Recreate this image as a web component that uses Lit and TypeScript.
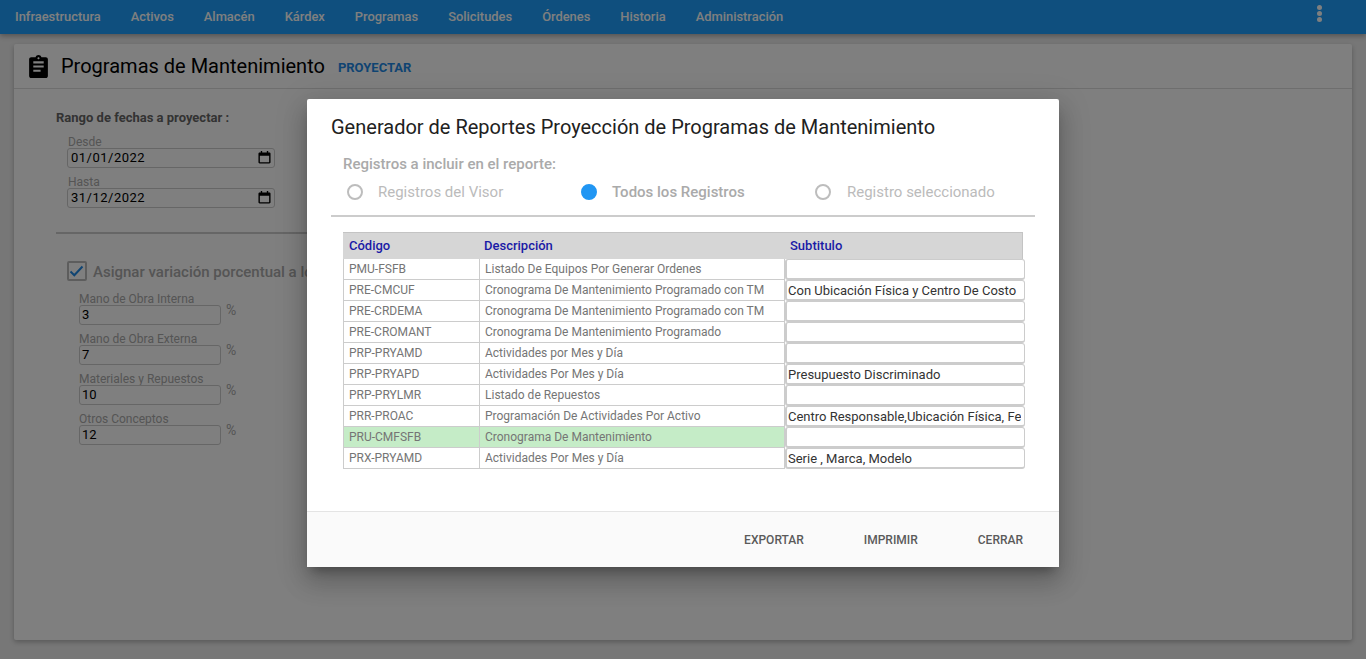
import type { TemplateResult } from 'lit';
import { css, html, LitElement } from 'lit';
import { customElement } from 'lit/decorators.js';

const MENU = ['Infraestructura', 'Activos', 'Almacén', 'Kárdex', 'Programas', 'Solicitudes', 'Órdenes', 'Historia', 'Administración'];

const PERCENTS = [
  { label: 'Mano de Obra Interna', value: '3' },
  { label: 'Mano de Obra Externa', value: '7' },
  { label: 'Materiales y Repuestos', value: '10' },
  { label: 'Otros Conceptos', value: '12' },
];

const REPORTS = [
  { code: 'PMU-FSFB', desc: 'Listado De Equipos Por Generar Ordenes', sub: '' },
  { code: 'PRE-CMCUF', desc: 'Cronograma De Mantenimiento Programado con TM', sub: 'Con Ubicación Física y Centro De Costo' },
  { code: 'PRE-CRDEMA', desc: 'Cronograma De Mantenimiento Programado con TM', sub: '' },
  { code: 'PRE-CROMANT', desc: 'Cronograma De Mantenimiento Programado', sub: '' },
  { code: 'PRP-PRYAMD', desc: 'Actividades por Mes y Día', sub: '' },
  { code: 'PRP-PRYAPD', desc: 'Actividades Por Mes y Día', sub: 'Presupuesto Discriminado' },
  { code: 'PRP-PRYLMR', desc: 'Listado de Repuestos', sub: '' },
  { code: 'PRR-PROAC', desc: 'Programación De Actividades Por Activo', sub: 'Centro Responsable,Ubicación Física, Fecha' },
  { code: 'PRU-CMFSFB', desc: 'Cronograma De Mantenimiento', sub: '', selected: true },
  { code: 'PRX-PRYAMD', desc: 'Actividades Por Mes y Día', sub: 'Serie , Marca, Modelo' },
];

@customElement('app-root')
export class AppRoot extends LitElement {
  public static styles = css`
    :host {
      position: relative;
      display: block;
      height: 659px;
      overflow: hidden;
      font-family: Roboto, 'Liberation Sans', sans-serif;
      background: #eeeeee;
    }

    .nav {
      display: flex;
      align-items: center;
      gap: 30px;
      box-sizing: border-box;
      height: 34px;
      padding: 0 15px 2px;
      background: #1e9ffd;
      box-shadow: 0 2px 5px rgba(0, 0, 0, 0.3);
      font-size: 12.9px;
      font-weight: 500;
      color: #fff;
    }

    .dots {
      display: flex;
      flex-direction: column;
      gap: 1px;
      margin-left: auto;
      margin-right: 29px;
      margin-top: -6px;
    }

    .dots i {
      width: 5px;
      height: 5px;
      background: #fff;
      border-radius: 50%;
    }

    .card {
      height: 596px;
      margin: 10px 14px 0;
      background: #fff;
      border-radius: 2px;
      box-shadow: 0 2px 5px rgba(0, 0, 0, 0.26);
    }

    .card-head {
      display: flex;
      align-items: center;
      height: 44px;
      padding-left: 12px;
      border-bottom: 1px solid #ddd;
    }

    .card-head svg {
      width: 25px;
      height: 25px;
      margin-right: 10px;
    }

    .card-head h1 {
      margin: 0;
      font-size: 20px;
      font-weight: 400;
      color: #000;
    }

    .card-head a {
      margin: 2px 0 0 13px;
      font-size: 13px;
      font-weight: 700;
      color: #1e88e5;
    }

    .card-body {
      width: 640px;
      padding: 21px 0 0 42px;
    }

    .range-title {
      font-size: 13px;
      font-weight: 700;
      line-height: 16px;
      color: #666;
    }

    .dates {
      display: flex;
      flex-direction: column;
      gap: 8px;
      margin: 10px 0 0 11px;
    }

    .field label {
      display: block;
      height: 12px;
      padding-left: 1px;
      font-size: 12px;
      line-height: 12px;
      color: #aaa;
    }

    .box {
      display: flex;
      align-items: center;
      justify-content: space-between;
      box-sizing: border-box;
      height: 20px;
      padding: 0 4px 1px 3px;
      border: 1px solid #ccc;
      border-radius: 3px;
      font-size: 13px;
      color: #000;
    }

    .box.date {
      width: 208px;
      letter-spacing: 0.5px;
    }

    .box.date svg {
      width: 13px;
      height: 13px;
      margin-right: -1px;
    }

    .rule {
      width: 640px;
      height: 2px;
      margin-top: 24px;
      background: #ccc;
    }

    .check-row {
      display: flex;
      align-items: center;
      gap: 6px;
      margin: 26px 0 0 11px;
      white-space: nowrap;
      font-size: 15px;
      font-weight: 500;
      color: #aaa;
    }

    .check-row span:last-child {
      margin-top: 3px;
    }

    .check {
      display: flex;
      align-items: center;
      justify-content: center;
      box-sizing: border-box;
      width: 20px;
      height: 20px;
      border: 2px solid #bbb;
      border-radius: 2px;
    }

    .check svg {
      width: 16px;
      height: 16px;
    }

    .percents {
      display: flex;
      flex-direction: column;
      gap: 8px;
      margin: 12px 0 0 23px;
    }

    .percents .field label {
      padding-left: 0;
    }

    .percent-row {
      display: flex;
      gap: 5px;
    }

    .box.percent {
      width: 142px;
      padding: 0 2px 1px;
      font-size: 13px;
    }

    .sign {
      margin-top: -3px;
      font-size: 14px;
      line-height: 17px;
      color: #aaa;
    }

    .overlay {
      position: absolute;
      inset: 0;
      background: rgba(0, 0, 0, 0.5);
    }

    .modal {
      position: absolute;
      top: 99px;
      left: 307px;
      display: flex;
      flex-direction: column;
      box-sizing: border-box;
      width: 752px;
      height: 468px;
      background: #fff;
      border-radius: 2px;
      box-shadow: 0 16px 24px 2px rgba(0, 0, 0, 0.14), 0 6px 30px 5px rgba(0, 0, 0, 0.12), 0 8px 10px -5px rgba(0, 0, 0, 0.3);
    }

    .content {
      flex: 1;
      padding: 16px 24px 0;
    }

    .modal h2 {
      margin: 0;
      font-size: 20px;
      line-height: 24px;
      font-weight: 400;
      color: #212121;
    }

    .include {
      margin: 17px 0 0 12px;
      font-size: 15px;
      line-height: 17px;
      font-weight: 500;
      color: #aaa;
    }

    .radios {
      display: grid;
      grid-template-columns: 234px 234px 1fr;
      margin: 9px 0 0 16px;
      height: 20px;
      padding-bottom: 13px;
    }

    .radio {
      display: flex;
      align-items: center;
      gap: 15px;
      font-size: 15px;
      color: #bbb;
    }

    .radio:last-child {
      gap: 16px;
    }

    .radio i {
      box-sizing: border-box;
      width: 16px;
      height: 16px;
      border: 2px solid #bdbdbd;
      border-radius: 50%;
    }

    .radio.on {
      font-weight: 500;
      color: #aaa;
    }

    .radio.on i {
      background: #2196f3;
      border-color: #2196f3;
    }

    .divider {
      height: 2px;
      background: #ccc;
    }

    .grid {
      display: grid;
      grid-template-columns: 137px 305px 238px;
      width: 680px;
      margin: 15px 0 0 12px;
      font-size: 12px;
      color: #757575;
    }

    .grid > div {
      display: flex;
      align-items: center;
      box-sizing: border-box;
      height: 21px;
      padding-left: 5px;
      overflow: hidden;
      white-space: nowrap;
      border-bottom: 1px solid #ccc;
      border-right: 1px solid #ccc;
    }

    .grid > .code {
      border-left: 1px solid #ccc;
    }

    .grid > .head {
      height: 27px;
      padding-left: 6px;
      font-size: 13px;
      font-weight: 500;
      color: #1a1aa6;
      background: #d6d6d6;
      border: none;
      box-shadow: inset 0 1px 0 #c4c4c4;
    }

    .grid > .head.desc {
      padding-left: 4px;
    }

    .grid > .head.last {
      padding-left: 5px;
      box-shadow: inset 0 1px 0 #c4c4c4, inset -1px 0 0 #c4c4c4;
    }

    .grid > .selected {
      background: #c5ecc7;
    }

    .grid > .sub {
      position: relative;
      padding: 0;
      border: none;
      overflow: visible;
    }

    .sub input {
      position: absolute;
      top: 0;
      left: 0;
      box-sizing: border-box;
      width: 240px;
      height: 21px;
      padding: 1px 3px 0 1px;
      font: 400 13px Roboto, 'Liberation Sans', sans-serif;
      color: #333;
      background: #fff;
      border: 1px solid #ccc;
      border-bottom-width: 2px;
      border-left-width: 2px;
      border-radius: 3px;
      outline: none;
    }

    .footer {
      display: flex;
      align-items: center;
      justify-content: flex-end;
      gap: 60px;
      box-sizing: border-box;
      height: 56px;
      padding-right: 36px;
      background: #fafafa;
      border-top: 1px solid #e4e4e4;
      font-size: 12px;
      font-weight: 500;
      color: #5a5a5a;
    }
  `;

  private calendarIcon(): TemplateResult {
    return html`<svg viewBox="0 0 14 14"><path fill="#000" d="M3 0h1.5v1.5h5V0H11v1.5h1.2c.7 0 1.3.6 1.3 1.3v9.4c0 .7-.6 1.3-1.3 1.3H1.8c-.7 0-1.3-.6-1.3-1.3V2.8c0-.7.6-1.3 1.3-1.3H3V0zM2 5v7h10V5H2z"/></svg>`;
  }

  public render(): TemplateResult {
    return html`
      <div class="nav">
        ${MENU.map((item) => html`<span>${item}</span>`)}
        <div class="dots"><i></i><i></i><i></i></div>
      </div>
      <div class="card">
        <div class="card-head">
          <svg viewBox="0 0 24 24"><path fill="#000" d="M19 3h-4.18C14.4 1.84 13.3 1 12 1s-2.4.84-2.82 2H5c-1.1 0-2 .9-2 2v16c0 1.1.9 2 2 2h14c1.1 0 2-.9 2-2V5c0-1.1-.9-2-2-2zm-7 0c.55 0 1 .45 1 1s-.45 1-1 1-1-.45-1-1 .45-1 1-1zm2 14H7v-2h7v2zm3-4H7v-2h10v2zm0-4H7V7h10v2z"/></svg>
          <h1>Programas de Mantenimiento</h1>
          <a>PROYECTAR</a>
        </div>
        <div class="card-body">
          <div class="range-title">Rango de fechas a proyectar :</div>
          <div class="dates">
            <div class="field"><label>Desde</label><div class="box date"><span>01/01/2022</span>${this.calendarIcon()}</div></div>
            <div class="field"><label>Hasta</label><div class="box date"><span>31/12/2022</span>${this.calendarIcon()}</div></div>
          </div>
          <div class="rule"></div>
          <div class="check-row">
            <span class="check"><svg viewBox="0 0 16 16"><path fill="none" stroke="#1e88e5" stroke-width="2" d="M1.5 8.5l3.8 3.8 8.2-8.8"/></svg></span>
            <span>Asignar variación porcentual a los</span>
          </div>
          <div class="percents">
            ${PERCENTS.map(
              (p) => html`<div class="field">
                <label>${p.label}</label>
                <div class="percent-row"><div class="box percent">${p.value}</div><span class="sign">%</span></div>
              </div>`,
            )}
          </div>
        </div>
      </div>
      <div class="overlay"></div>
      <div class="modal">
        <div class="content">
          <h2>Generador de Reportes Proyección de Programas de Mantenimiento</h2>
          <div class="include">Registros a incluir en el reporte:</div>
          <div class="radios">
            <label class="radio"><i></i>Registros del Visor</label>
            <label class="radio on"><i></i>Todos los Registros</label>
            <label class="radio"><i></i>Registro seleccionado</label>
          </div>
          <div class="divider"></div>
          <div class="grid">
            <div class="head">Código</div>
            <div class="head desc">Descripción</div>
            <div class="head last">Subtitulo</div>
            ${REPORTS.map(
              (r) => html`
                <div class="code ${r.selected ? 'selected' : ''}">${r.code}</div>
                <div class="${r.selected ? 'selected' : ''}">${r.desc}</div>
                <div class="sub"><input type="text" .value=${r.sub} /></div>
              `,
            )}
          </div>
        </div>
        <div class="footer">
          <span>EXPORTAR</span>
          <span>IMPRIMIR</span>
          <span>CERRAR</span>
        </div>
      </div>
    `;
  }
}

export default AppRoot;
